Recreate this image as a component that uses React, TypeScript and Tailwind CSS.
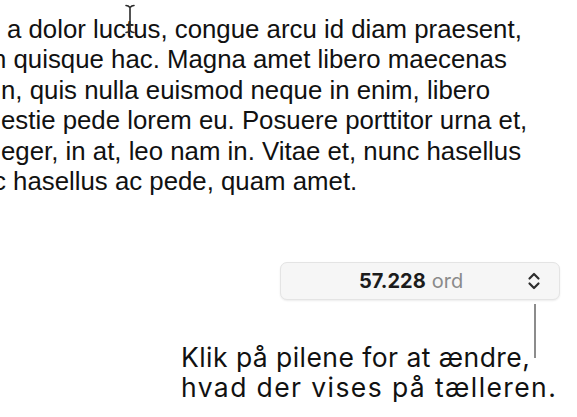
import React from 'react';

const lines = [
  { text: 'a dolor luctus, congue arcu id diam praesent,', cls: 'pl-[7px]' },
  { text: 'n quisque hac. Magna amet libero maecenas', cls: 'ml-[-8px]' },
  { text: 'n, quis nulla euismod neque in enim, libero', cls: 'pl-[1px]' },
  { text: 'estie pede lorem eu. Posuere porttitor urna et,', cls: 'pl-[1px]' },
  { text: 'eger, in at, leo nam in. Vitae et, nunc hasellus', cls: 'pl-[1px]' },
  { text: 'c hasellus ac pede, quam amet.', cls: 'ml-[-7px]' },
];

const TextCursor = () => (
  <svg width="14" height="30" viewBox="0 0 14 30" className="absolute left-[123px] top-[4px]">
    <path d="M3 1.5c2 0 3 .8 4 2 1-1.2 2-2 4-2M3 28.5c2 0 3-.8 4-2 1 1.2 2 2 4 2M7 3.5v23M4 21h6" stroke="#2a2a2a" strokeWidth="1.6" fill="none" strokeLinecap="round" />
  </svg>
);

const App: React.FC = () => {
  return (
    <div className="w-[577px] h-[417px] bg-white overflow-hidden relative">
      {/* brødtekst */}
      <div className="relative pt-[14px] overflow-hidden font-['Liberation_Sans',Arial,sans-serif] text-[25.8px] leading-[30.4px] text-[#111]">
        {lines.map((l, i) => (
          <div key={i} className={`whitespace-nowrap ${l.cls}`}>{l.text}</div>
        ))}
        <TextCursor />
      </div>

      {/* tæller */}
      <div className="flex justify-end pr-[17px] mt-[66px]">
        <div className="w-[280px] h-[38px] rounded-[7px] bg-[#f6f6f6] border border-[#e4e4e4] shadow-[0_1px_2px_rgba(0,0,0,0.08)] flex items-center font-['Inter',sans-serif] text-[20px]">
          <div className="flex-1 text-center pl-[14px]">
            <span className="font-bold text-[#1c1c1c]">57.228</span>
            <span className="text-[#8a8a8a] ml-[6px]">ord</span>
          </div>
          <svg width="14" height="18" viewBox="0 0 14 18" className="mr-[18px]">
            <path d="M2.5 6.5 7 2l4.5 4.5M2.5 11.5 7 16l4.5-4.5" stroke="#2e2e2e" strokeWidth="2.2" fill="none" strokeLinecap="round" strokeLinejoin="round" />
          </svg>
        </div>
      </div>

      {/* forklaring */}
      <div className="flex justify-end pr-[41px]">
        <div className="w-[2px] h-[54px] bg-[#8c8c8c] mt-[4px]" />
      </div>
      <div className="mt-[-16px] pl-[181px] font-['Inter',sans-serif] text-[26.5px] leading-[30px] text-[#111]">
        <div className="tracking-[0.45px]">Klik på pilene for at ændre,</div>
        <div className="tracking-[1.4px]">hvad der vises på tælleren.</div>
      </div>
    </div>
  );
};

export default App;
